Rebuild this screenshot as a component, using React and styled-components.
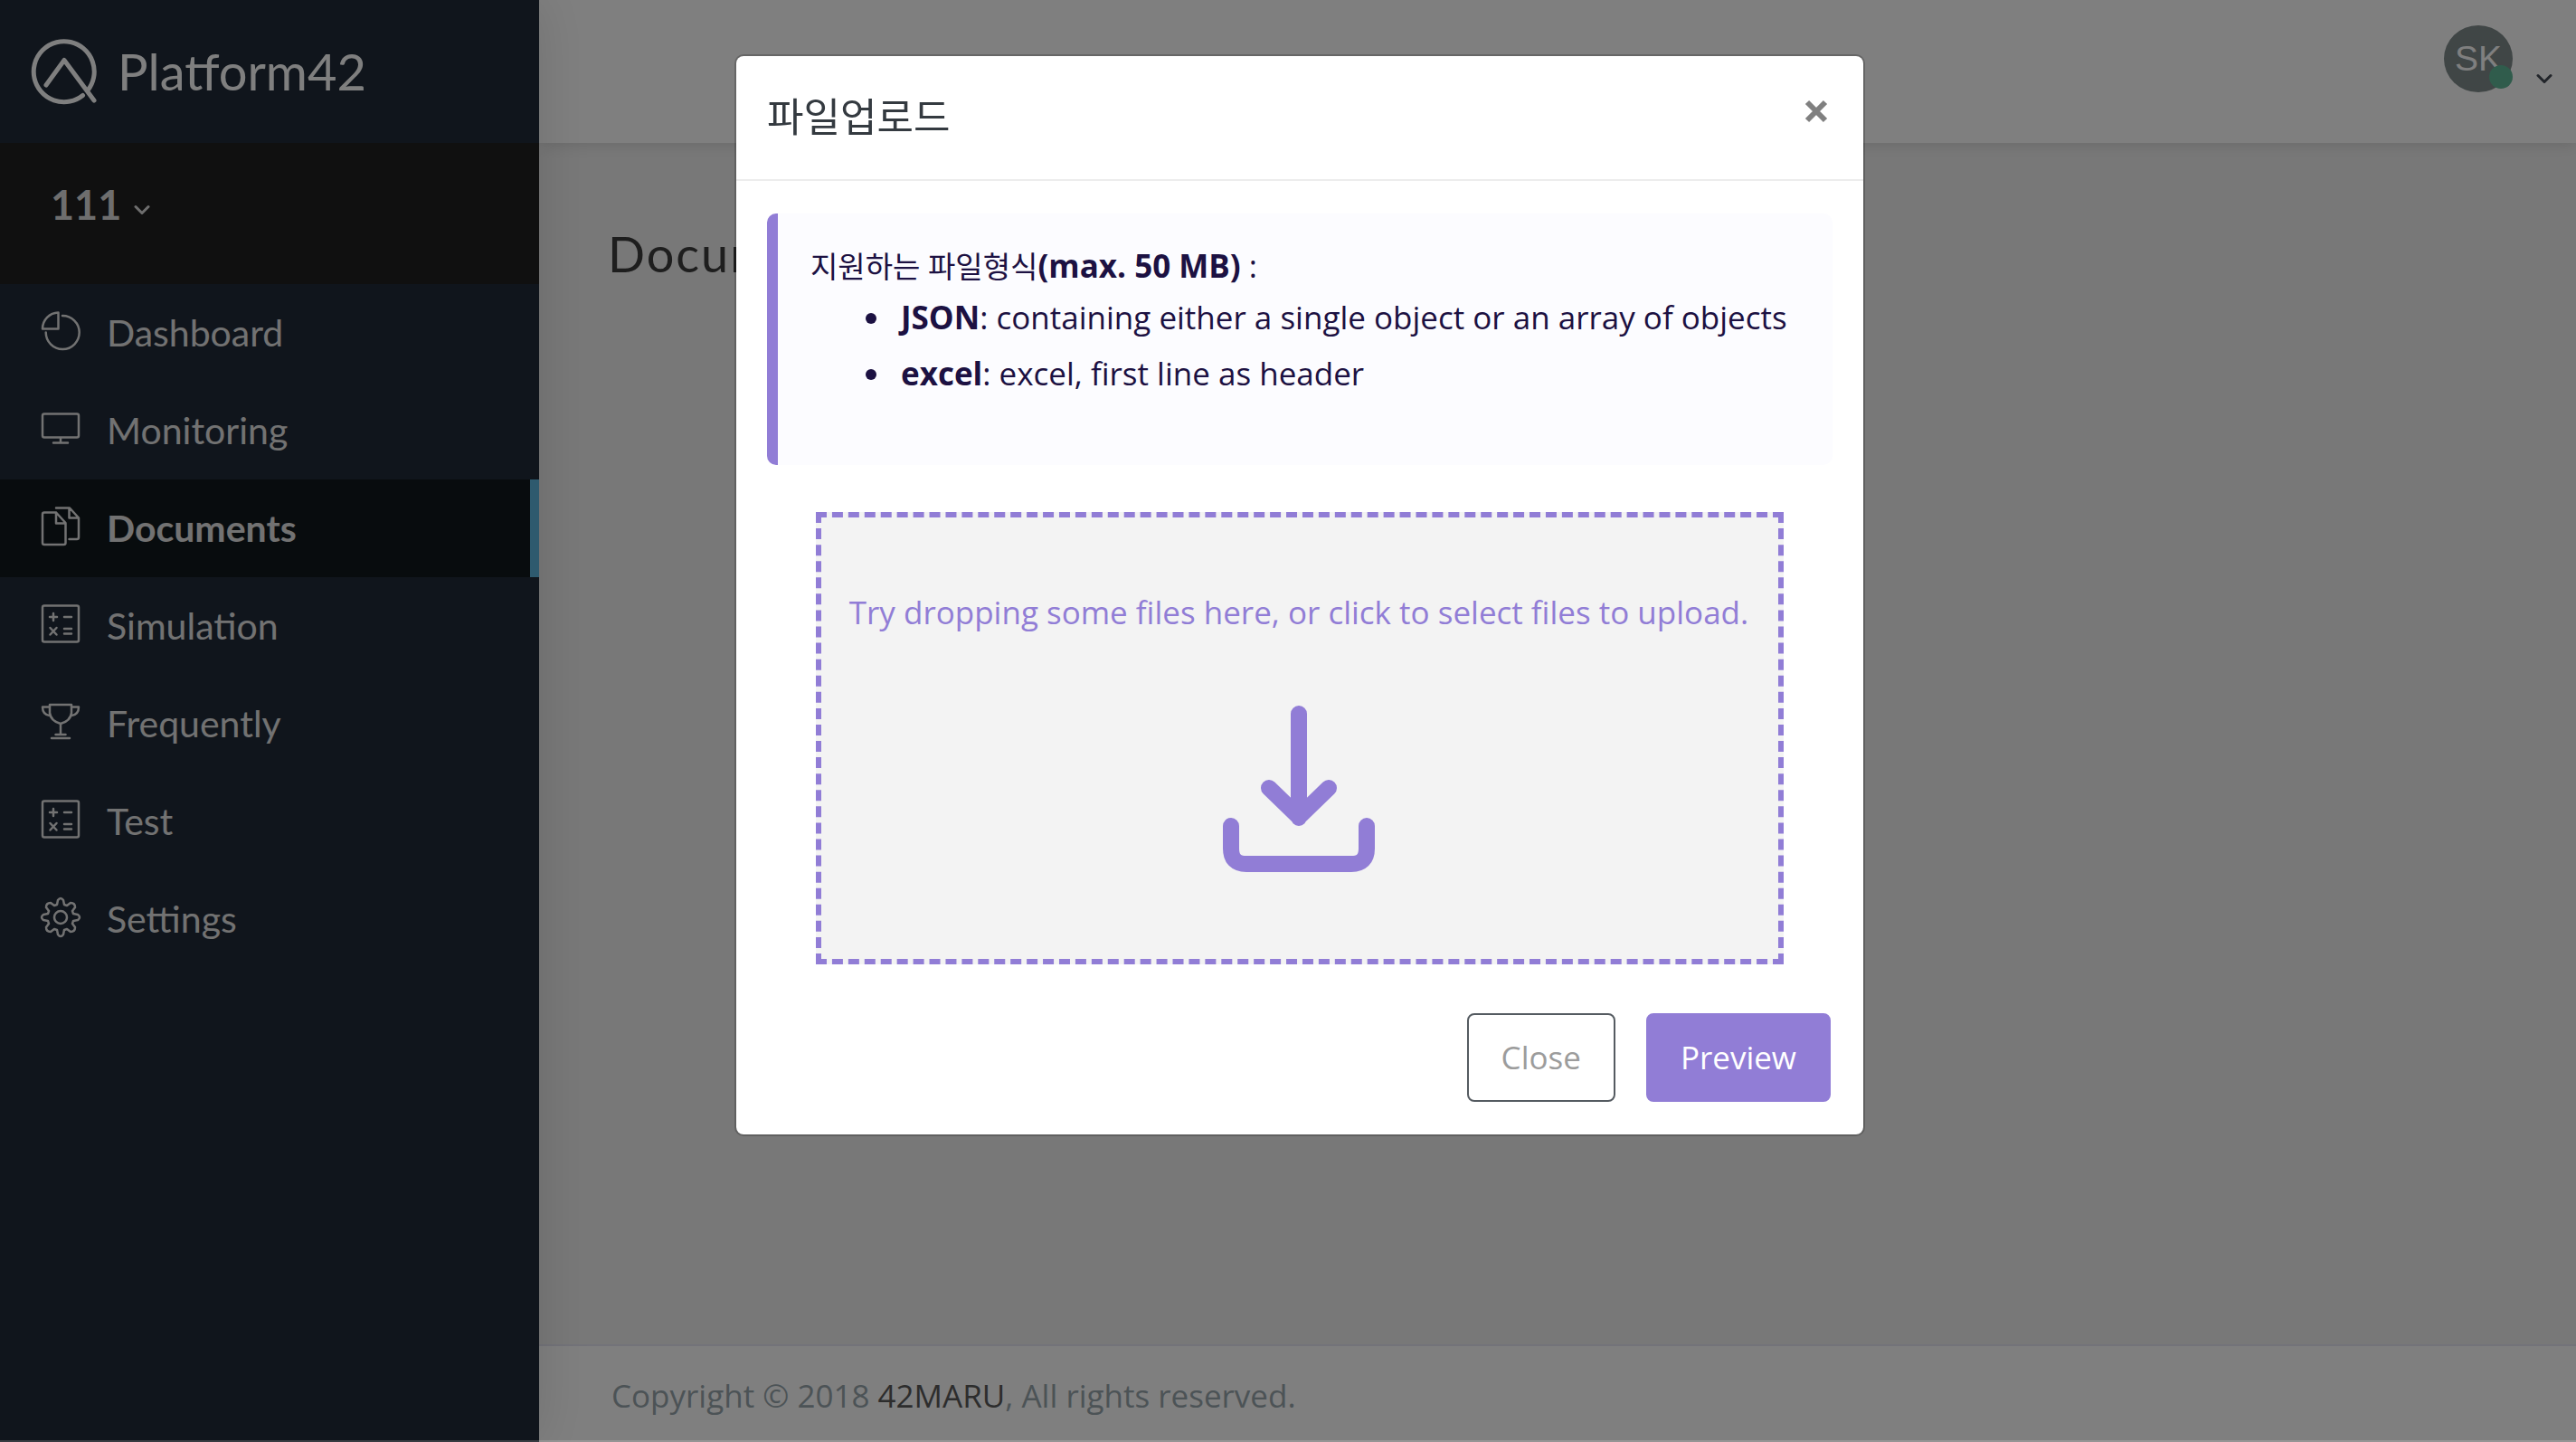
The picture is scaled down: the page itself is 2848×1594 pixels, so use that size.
import React from "react";
import styled, { createGlobalStyle } from "styled-components";

const GlobalStyle = createGlobalStyle`
  * { box-sizing: border-box; }
  body { margin: 0; font-family: "Open Sans", "Noto Sans CJK KR", sans-serif; font-size: 35px; }
  button { font: inherit; cursor: pointer; }
  a { color: inherit; text-decoration: none; }
  h1, h2, p, ul { margin: 0; padding: 0; }
`;

const Shell = styled.div`
  display: grid;
  grid-template-columns: 596px 1fr;
  min-height: 100vh;
  background: #f1f1f1;
`;

const Sidebar = styled.aside`
  background: #202a38;
  color: #e4e4e4;
  font-family: Lato, sans-serif;
  box-shadow: 0 0 56px rgba(0, 0, 0, 0.12);
  z-index: 1;
`;

const Brand = styled.a`
  display: flex;
  align-items: center;
  gap: 20px;
  height: 158px;
  padding: 0 0 2px 34px;
  font-size: 56px;
  color: #ffffff;
`;

const Workspace = styled.button`
  display: flex;
  align-items: center;
  gap: 14px;
  width: 100%;
  height: 156px;
  padding: 0 56px 20px;
  border: 0;
  background: #202020;
  color: #dcdcdc;
  font-size: 45px;
  font-weight: 700;
`;

const WorkspaceArrow = styled.span`
  display: flex;
  padding-top: 12px;
`;

const NavLink = styled.a`
  display: flex;
  align-items: center;
  gap: 28px;
  height: 108px;
  padding: 0 0 2px 44px;
  font-size: 41px;
  font-weight: ${(p) => (p.$active ? 700 : 400)};
  background: ${(p) => (p.$active ? "#10181c" : "transparent")};
  border-right: 10px solid ${(p) => (p.$active ? "#5cb4dc" : "transparent")};
`;

const NavIcon = styled.span`
  display: flex;
  padding-bottom: 2px;
`;

const Page = styled.div`
  display: flex;
  flex-direction: column;
`;

const TopBar = styled.header`
  display: flex;
  justify-content: flex-end;
  height: 158px;
  padding: 28px 26px 0 0;
  background: #ffffff;
  box-shadow: 0 2px 16px rgba(0, 0, 0, 0.12);
`;

const Profile = styled.button`
  display: flex;
  align-items: flex-start;
  gap: 26px;
  padding: 0;
  border: 0;
  background: none;
  color: #444b54;
`;

const Avatar = styled.span`
  position: relative;
  display: flex;
  align-items: center;
  justify-content: center;
  width: 76px;
  height: 74px;
  border-radius: 50%;
  background: #808c8c;
  color: #ffffff;
  font: 39px "Liberation Sans", sans-serif;
`;

const Status = styled.span`
  position: absolute;
  right: 0;
  bottom: 4px;
  width: 26px;
  height: 26px;
  border-radius: 50%;
  background: #60b898;
`;

const ProfileArrow = styled.span`
  display: flex;
  padding-top: 52px;
`;

const Content = styled.main`
  flex: 1;
  padding: 84px 76px;
`;

const PageTitle = styled.h1`
  font: 400 54px/78px Lato, sans-serif;
  letter-spacing: 2px;
  color: #3c3c3c;
`;

const Footer = styled.footer`
  padding: 30px 80px 26px;
  border-top: 2px solid #e6e6f2;
  background: #ffffff;
  color: #98a6ad;
  line-height: 50px;
`;

const FooterLink = styled.a`
  color: #5a5a5a;
`;

const Backdrop = styled.div`
  position: fixed;
  inset: 0;
  z-index: 2;
  display: flex;
  justify-content: center;
  align-items: flex-start;
  padding: 60px 0 0 26px;
  border-bottom: 2px solid rgba(255, 255, 255, 0.17);
  background: rgba(0, 0, 0, 0.5);
`;

const Dialog = styled.section`
  width: 1250px;
  border: 2px solid rgba(0, 0, 0, 0.2);
  border-radius: 10px;
  background: #ffffff;
  background-clip: padding-box;
`;

const DialogHeader = styled.header`
  display: flex;
  justify-content: space-between;
  align-items: flex-start;
  height: 138px;
  padding: 35px 38px 0 34px;
  border-bottom: 2px solid #ececec;
`;

const DialogTitle = styled.h2`
  font: 400 44px/64px Lato, "Noto Sans CJK KR", sans-serif;
  color: #343a40;
`;

const IconButton = styled.button`
  display: flex;
  padding: 12px 0;
  border: 0;
  background: none;
  color: #808080;
`;

const DialogBody = styled.div`
  display: flex;
  flex-direction: column;
  gap: 52px;
  padding: 36px 34px 0;
`;

const Note = styled.div`
  height: 278px;
  padding: 33px 36px 0;
  border-left: 12px solid #917dd6;
  border-radius: 10px;
  background: #fcfcff;
  color: #1c1142;
`;

const NoteLead = styled.p`
  line-height: 50px;
`;

const Korean = styled.span`
  font-size: 33px;
`;

const FormatList = styled.ul`
  padding-left: 92px;
  line-height: 62px;

  li { padding-left: 8px; }
`;

const DropZone = styled.button`
  display: flex;
  flex-direction: column;
  align-items: center;
  gap: 78px;
  height: 500px;
  margin: 0 54px;
  padding: 80px 2px 0 0;
  border: 6px dashed #917dd6;
  background: #f3f3f3;
  color: #917dd6;
  line-height: 50px;
  white-space: nowrap;
`;

const Actions = styled.footer`
  display: flex;
  justify-content: flex-end;
  gap: 34px;
  padding: 54px 36px 36px;
`;

const Action = styled.button`
  height: 98px;
  padding: 0 36px 2px;
  border: 2px solid ${(p) => (p.$primary ? "#917dd6" : "#555b61")};
  border-radius: 8px;
  background: ${(p) => (p.$primary ? "#917dd6" : "#ffffff")};
  color: ${(p) => (p.$primary ? "#ffffff" : "#9c9c9c")};
`;

const Line = ({ w = 46, h = 46, sw = 2.5, box, children }) => (
  <svg width={w} height={h} viewBox={box || `0 0 ${w} ${h}`} fill="none" stroke="currentColor" strokeWidth={sw} strokeLinecap="round" strokeLinejoin="round" aria-hidden="true">
    {children}
  </svg>
);

const Logo = () => (
  <Line w={76} h={76} sw={5}>
    <path d="M57.5 65.5A33.5 33.5 0 1 1 63 60M17 54L37 26.500L70 71" />
  </Line>
);

const Chevron = () => (
  <Line w={18} h={14} sw={3}>
    <path d="M2 3.500L9 10.500L16 3.500" />
  </Line>
);

const icons = {
  pie: <path d="M20.500 2.500V20.500H3A18 18 0 0 1 20.500 2.500ZM25 6A18.500 18.500 0 1 1 6.700 24.500" />,
  monitor: <path d="M5 6.500H41Q43 6.500 43 8.500V30.500Q43 32.500 41 32.500H5Q3 32.500 3 30.500V8.500Q3 6.500 5 6.500ZM23 32.500V38.500M15 38.500H31" />,
  files: <path d="M5 7.500H18L28.500 19V41Q28.500 43 26.500 43H5Q3 43 3 41V9.500Q3 7.500 5 7.500ZM18 7.500V19.500H28.500M18 2.500H33L43 13.500V35Q43 37 41 37H32.500M32.500 3V13.500H43" />,
  calc: <path d="M5 2.500H41Q43 2.500 43 4.500V40.500Q43 42.500 41 42.500H5Q3 42.500 3 40.500V4.500Q3 2.500 5 2.500ZM11 15H19M15 11V19M27 15H35M11.500 27L18.500 34.500M18.500 27L11.500 34.500M27 28H35M27 33.500H35" />,
  trophy: <path d="M11 4H35V13Q34 22 23 25Q12 22 11 13ZM11 6.500H3Q3 15 11 16M35 6.500H43Q43 15 35 16M23 25V37M17.500 37H28.500M13 41H33" />,
  gear: (
    <>
      <circle cx="23" cy="23" r="7" />
      <path d="M20 4Q23 0 26 4L27 9L30 10L34 7Q39 7 39 12L36 16L37 19L42 20Q46 23 42 26L37 27L36 30L39 34Q39 39 34 39L30 36L27 37L26 42Q23 46 20 42L19 37L16 36L12 39Q7 39 7 34L10 30L9 27L4 26Q0 23 4 20L9 19L10 16L7 12Q7 7 12 7L16 10L19 9Z" />
    </>
  ),
};

const navItems = [
  ["Dashboard", "pie"],
  ["Monitoring", "monitor"],
  ["Documents", "files"],
  ["Simulation", "calc"],
  ["Frequently", "trophy"],
  ["Test", "calc"],
  ["Settings", "gear"],
];

export default function App() {
  return (
    <>
      <GlobalStyle />
      <Shell>
        <Sidebar>
          <Brand href="#"><Logo />Platform42</Brand>
          <Workspace type="button">
            111
            <WorkspaceArrow><Chevron /></WorkspaceArrow>
          </Workspace>
          <nav aria-label="Main">
            {navItems.map(([label, icon]) => (
              <NavLink href="#" key={label} $active={label === "Documents"}>
                <NavIcon><Line>{icons[icon]}</Line></NavIcon>
                {label}
              </NavLink>
            ))}
          </nav>
        </Sidebar>
        <Page>
          <TopBar>
            <Profile type="button" aria-label="Account">
              <Avatar>SK<Status /></Avatar>
              <ProfileArrow><Chevron /></ProfileArrow>
            </Profile>
          </TopBar>
          <Content><PageTitle>Docum</PageTitle></Content>
          <Footer>
            Copyright © 2018 <FooterLink href="#">42MARU</FooterLink>, All rights reserved.
          </Footer>
        </Page>
      </Shell>
      <Backdrop>
        <Dialog role="dialog" aria-modal="true" aria-labelledby="upload-title">
          <DialogHeader>
            <DialogTitle id="upload-title">파일업로드</DialogTitle>
            <IconButton type="button" aria-label="Close dialog">
              <Line w={28} h={28} sw={6}><path strokeLinecap="butt" d="M4 4L24 24M24 4L4 24" /></Line>
            </IconButton>
          </DialogHeader>
          <DialogBody>
            <Note>
              <NoteLead><Korean>지원하는 파일형식</Korean><b>(max. 50 MB)</b> :</NoteLead>
              <FormatList>
                <li><b>JSON</b>: containing either a single object or an array of objects</li>
                <li><b>excel</b>: excel, first line as header</li>
              </FormatList>
            </Note>
            <DropZone type="button">
              Try dropping some files here, or click to select files to upload.
              <Line w={168} h={184} sw={18}>
                <path d="M84 9V124M51 91L84 123L117 91M9 133V158Q9 175 26 175H142Q159 175 159 158V133" />
              </Line>
            </DropZone>
          </DialogBody>
          <Actions>
            <Action type="button">Close</Action>
            <Action type="button" $primary>Preview</Action>
          </Actions>
        </Dialog>
      </Backdrop>
    </>
  );
}
